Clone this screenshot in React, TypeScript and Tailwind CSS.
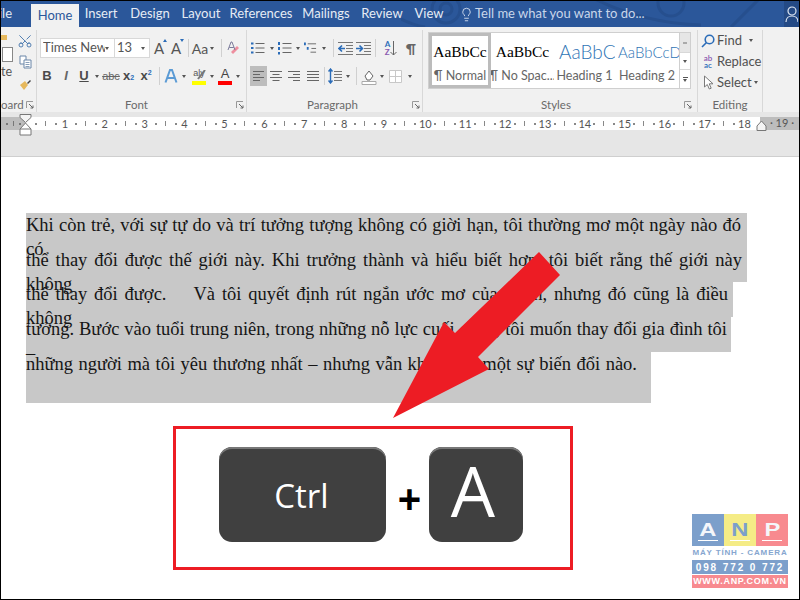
import React from "react";
import { Scissors, Lightbulb } from "lucide-react";

const Cell = ({ c, children }: { c: string; children?: React.ReactNode }) => (
  <div className={"flex shrink-0 items-center justify-center h-full " + c}>{children}</div>
);
const Caret = () => <div className="w-0 h-0 border-x-[2.5px] border-x-transparent border-t-[3px] border-t-[#555]" />;
const Sep = () => <div className="w-px h-[18px] bg-[#d0d0d0]" />;
const Launcher = () => (
  <svg width="8" height="8" viewBox="0 0 8 8" className="shrink-0">
    <path d="M0.5 7V0.5H7" stroke="#999" fill="none" />
    <path d="M3 3L7 7M7 4.5V7H4.5" stroke="#666" fill="none" />
  </svg>
);
const Lines = ({ d, w = 16, color = "#666" }: { d: string; w?: number; color?: string }) => (
  <svg width={w} height="14" viewBox={`0 0 ${w} 14`}>
    <path d={d} stroke={color} strokeWidth="1" fill="none" />
  </svg>
);
const Dots = ({ d }: { d: string }) => <path d={d} stroke="#2b6cb8" strokeWidth="2" fill="none" />;

const Tab = ({ c, children }: { c: string; children: React.ReactNode }) => (
  <div className={"flex shrink-0 items-center justify-center h-[26px] text-[#e6ecf5] " + c}>{children}</div>
);

const GroupLabel = ({ label, c }: { label: string; c: string }) => (
  <div className={"flex items-center h-[15px] text-[11.5px] text-[#6a6a6a] " + c}>
    <span className="flex-1 text-center">{label}</span>
    <Launcher />
  </div>
);

function TitleBar() {
  return (
    <div className="relative flex h-[26px] bg-[#2b579a] text-[13px] overflow-hidden">
      <svg className="absolute left-[400px] top-0" width="399" height="26" viewBox="0 0 399 26">
        <g stroke="#264f8e" strokeWidth="3" fill="none">
          <circle cx="45" cy="8" r="14" />
          <circle cx="45" cy="8" r="6" />
          <circle cx="270" cy="2" r="13" />
          <path d="M190 -4 Q 240 22 300 24" />
          <path d="M330 26 L 358 -2" />
          <path d="M0 18 Q 12 24 24 26" />
        </g>
      </svg>
      <div className="relative flex w-[30px] shrink-0 items-center justify-end pr-[19px] text-[#e6ecf5]">ile</div>
      <div className="relative mt-[3px] flex h-[23px] w-[48px] shrink-0 items-center justify-center bg-[#f1f1f1] text-[#2b579a]">Home</div>
      <Tab c="relative w-[44px]">Insert</Tab>
      <Tab c="relative w-[54px]">Design</Tab>
      <Tab c="relative w-[48px]">Layout</Tab>
      <Tab c="relative w-[72px]">References</Tab>
      <Tab c="relative w-[58px]">Mailings</Tab>
      <Tab c="relative w-[54px]">Review</Tab>
      <Tab c="relative w-[40px]">View</Tab>
      <div className="relative flex h-[26px] items-center pl-[10px] text-[#c9d6ea] text-[13px]">
        <Lightbulb size={15} strokeWidth={1.4} color="#dbe4f2" className="mr-[1px]" />
        Tell me what you want to do...
      </div>
      <div className="absolute right-0 top-0 flex h-[26px] w-[15px] items-center justify-center bg-[#244a85]">
        <svg width="13" height="16" viewBox="0 0 13 16" fill="none" stroke="#dfe7f3" strokeWidth="1.2">
          <circle cx="7" cy="5" r="4" />
          <path d="M1 16c0-4 3-6 6-6s6 2 6 6" />
        </svg>
      </div>
    </div>
  );
}

function Clipboard() {
  return (
    <div className="mt-[3px] flex w-[36px] shrink-0 flex-col border-r border-[#d8d8d8] pt-[3px] overflow-hidden">
      <div className="flex h-[64px] shrink-0">
        <div className="w-[16px] shrink-0 flex flex-col">
          <div className="mt-[2px] h-[5px] w-[6px] bg-[#e6b85c]" />
          <div className="mt-[7px] ml-[1px] h-[15px] w-[11px] border border-[#888] bg-white" />
          <div className="mt-[3px] text-[12.5px] leading-[14px] text-[#555]">te</div>
        </div>
        <div className="flex flex-col items-center w-[16px]">
          <Scissors size={16} strokeWidth={1.3} color="#3b6ea8" className="-rotate-90" />
          <svg width="13" height="14" viewBox="0 0 13 14" fill="#fff" stroke="#6a86a8" className="mt-[6px]">
            <path d="M1 1h6v8H1z" />
            <path d="M5 5h7v8H5z" />
            <path d="M6.5 7.5h4M6.5 9.5h4M6.5 11.5h4" strokeWidth=".8" />
          </svg>
          <svg width="13" height="14" viewBox="0 0 13 14" className="mt-[8px]">
            <path d="M1 8l5-4 3 4-4 5z" fill="#e6b85c" />
            <path d="M8 6l3-3 1 1-3 3z" fill="#444" />
          </svg>
        </div>
      </div>
      <GroupLabel label="oard" c="pr-[2px] [&>span]:text-left" />
    </div>
  );
}

const SizeA = ({ up }: { up?: boolean }) => (
  <div className="relative">
    <span className="text-[15px] text-[#555]">A</span>
    <div
      className={
        up
          ? "absolute -right-[3px] top-[3px] w-0 h-0 border-x-[2.5px] border-x-transparent border-b-[3px] border-b-[#2b6cb8]"
          : "absolute -right-[3px] top-[3px] w-0 h-0 border-x-[2.5px] border-x-transparent border-t-[3px] border-t-[#2b6cb8]"
      }
    />
  </div>
);

function FontGroup() {
  return (
    <div className="mt-[3px] flex w-[210px] shrink-0 flex-col border-r border-[#d8d8d8] pt-[8px]">
      <div className="flex h-[20px] shrink-0 pl-[3px]">
        <div className="flex h-full w-[75px] shrink-0 items-center border border-[#d8d8d8] bg-white pl-[2px] text-[13px] text-[#555] overflow-hidden">
          <span className="w-[62px] shrink-0 overflow-hidden whitespace-nowrap">Times New R</span>
          <Caret />
        </div>
        <div className="-ml-px flex h-full w-[36px] shrink-0 items-center justify-between border border-[#d8d8d8] bg-white pl-[2px] pr-[4px] text-[13px] text-[#555]">
          <span>13</span>
          <Caret />
        </div>
        <Cell c="w-[18px]"><SizeA up /></Cell>
        <Cell c="w-[16px]"><SizeA /></Cell>
        <Cell c="w-[8px]"><Sep /></Cell>
        <Cell c="w-[16px] text-[14px] text-[#555]">Aa</Cell>
        <Cell c="w-[8px]"><Caret /></Cell>
        <Cell c="w-[10px]"><Sep /></Cell>
        <Cell c="w-[16px]">
          <svg width="14" height="15" viewBox="0 0 14 15">
            <path d="M6 13l6-6-2-2-6 6z" fill="#ee8f9f" />
            <path d="M1 9l3-8h1l3 8M2.300 6.500h4.500" stroke="#7a7a9a" fill="none" />
          </svg>
        </Cell>
      </div>
      <div className="mt-[8px] flex h-[20px] shrink-0 pl-[1px] text-[#4a4a4a] [font-family:'Liberation_Sans',sans-serif]">
        <Cell c="w-[18px] text-[13px] font-bold">B</Cell>
        <Cell c="w-[20px] text-[13px] italic font-bold text-[#666]">I</Cell>
        <Cell c="w-[16px] text-[13px] font-bold underline">U</Cell>
        <Cell c="w-[10px]"><Caret /></Cell>
        <Cell c="w-[18px] text-[11px] line-through text-[#666]">abc</Cell>
        <Cell c="w-[17px] text-[13px] font-bold">x<sub className="text-[7px] text-[#2b6cb8]">2</sub></Cell>
        <Cell c="w-[18px] text-[13px] font-bold">x<sup className="text-[7px] text-[#2b6cb8]">2</sup></Cell>
        <Cell c="w-[8px]"><Sep /></Cell>
        <Cell c="w-[16px]">
          <svg width="14" height="16" viewBox="0 0 14 16"><path d="M1.500 14.500L6 2h2l4.500 12.500M3.500 10h7" stroke="#5b9bd5" strokeWidth="2" fill="none" /></svg>
        </Cell>
        <Cell c="w-[10px]"><Caret /></Cell>
        <Cell c="w-[20px]">
          <div className="relative flex flex-col items-center">
            <span className="text-[9px] leading-[11px] text-[#555]">aly</span>
            <svg className="absolute left-[5px] top-[2px]" width="9" height="10" viewBox="0 0 9 10"><path d="M8 0L1 9" stroke="#777" strokeWidth="2" /></svg>
            <div className="mt-[2px] h-[4px] w-[14px] bg-[#ffff00]" />
          </div>
        </Cell>
        <Cell c="w-[6px]"><Caret /></Cell>
        <Cell c="w-[20px]">
          <div className="flex flex-col items-center">
            <span className="text-[13px] leading-[13px] text-[#444]">A</span>
            <div className="mt-[1px] h-[4px] w-[14px] bg-[#ff0000]" />
          </div>
        </Cell>
        <Cell c="w-[6px]"><Caret /></Cell>
      </div>
      <div className="mt-[11px]">
        <GroupLabel label="Font" c="pr-[2px]" />
      </div>
    </div>
  );
}

const ListIcon = ({ kind }: { kind: number }) => (
  <svg width="14" height="14" viewBox="0 0 14 14">
    {kind === 0 && <Dots d="M0 2.500h2.500M0 7h2.500M0 11.500h2.500" />}
    {kind === 1 && <Dots d="M1 1v3M1 6v3M1 11v2.500" />}
    {kind === 2 && <Dots d="M1 1v3M4 6v3" />}
    <path d={kind === 2 ? "M4 2.500h9M8 7.500h5M7 11.500h6" : "M4.500 2.500h9M4.500 7h9M4.500 11.500h9"} stroke="#666" fill="none" />
  </svg>
);

const Indent = ({ flip }: { flip?: boolean }) => (
  <svg width="15" height="13" viewBox="0 0 15 13" fill="none">
    <path d="M0 .5h15M8 3.500h7M8 6.500h7M8 9.500h7M0 12.500h15" stroke="#777" />
    {flip ? (
      <path d="M0 6.500h6M3.500 3.500l3 3-3 3" stroke="#2b6cb8" strokeWidth="1.600" />
    ) : (
      <path d="M7 6.500H1M4 3.500l-3 3 3 3" stroke="#2b6cb8" strokeWidth="1.600" />
    )}
  </svg>
);

function Paragraph() {
  return (
    <div className="mt-[3px] flex w-[176px] shrink-0 flex-col border-r border-[#d8d8d8] pt-[8px]">
      <div className="flex h-[20px] shrink-0 pl-[4px]">
        <Cell c="w-[14px]"><ListIcon kind={0} /></Cell>
        <Cell c="w-[13px]"><Caret /></Cell>
        <Cell c="w-[14px]"><ListIcon kind={1} /></Cell>
        <Cell c="w-[12px]"><Caret /></Cell>
        <Cell c="w-[13px]"><ListIcon kind={2} /></Cell>
        <Cell c="w-[13px]"><Caret /></Cell>
        <Cell c="w-[6px]"><Sep /></Cell>
        <Cell c="w-[18px]"><Indent /></Cell>
        <Cell c="w-[18px]"><Indent flip /></Cell>
        <Cell c="w-[6px]"><Sep /></Cell>
        <Cell c="w-[26px]">
          <div className="flex items-center">
            <div className="flex flex-col text-[8px] leading-[8px] font-bold">
              <span className="text-[#2b6cb8]">A</span>
              <span className="text-[#8a5ab0]">Z</span>
            </div>
            <svg width="7" height="15" viewBox="0 0 7 15"><path d="M3.500 0v14M.5 11l3 3 3-3" stroke="#666" fill="none" /></svg>
          </div>
        </Cell>
        <Cell c="w-[14px] text-[14px] font-bold text-[#666]">¶</Cell>
      </div>
      <div className="mt-[8px] flex h-[20px] shrink-0 pl-[3px]">
        <Cell c="w-[17px] bg-[#bdbdbd]"><Lines w={11} d="M0 2.500h11M0 5.500h7M0 8.500h11M0 11.500h7" /></Cell>
        <Cell c="w-[18px]"><Lines w={12} d="M0 2.500h12M2.500 5.500h7M0 8.500h12M2.500 11.500h7" /></Cell>
        <Cell c="w-[18px]"><Lines w={12} d="M0 2.500h12M5 5.500h7M0 8.500h12M5 11.500h7" /></Cell>
        <Cell c="w-[19px]"><Lines w={12} d="M0 2.500h12M0 5.500h12M0 8.500h12M0 11.500h12" /></Cell>
        <Cell c="w-[4px]"><Sep /></Cell>
        <Cell c="w-[18px]">
          <svg width="14" height="16" viewBox="0 0 14 16" fill="none">
            <path d="M2.500 1v14M.5 3.500l2-2.500 2 2.500M.5 12.500l2 2.500 2-2.500" stroke="#2b6cb8" strokeWidth="1.400" />
            <path d="M6 3.500h8M6 6.500h8M6 9.500h8M6 12.500h8" stroke="#777" />
          </svg>
        </Cell>
        <Cell c="w-[8px]"><Caret /></Cell>
        <Cell c="w-[8px]"><Sep /></Cell>
        <Cell c="w-[18px]">
          <svg width="16" height="17" viewBox="0 0 16 17" fill="none">
            <path d="M4 8l4-5 4 5-3 4H6z" stroke="#666" fill="#fff" />
            <path d="M1 13.500h14v3H1z" stroke="#aaa" fill="#fff" />
          </svg>
        </Cell>
        <Cell c="w-[8px]"><Caret /></Cell>
        <Cell c="w-[18px]">
          <svg width="13" height="13" viewBox="0 0 13 13" fill="#fff" stroke="#c8c8c8"><path d="M.5.500h12v12H.5zM6.500.5v12M.5 6.500h12" /></svg>
        </Cell>
        <Cell c="w-[12px]"><Caret /></Cell>
      </div>
      <div className="mt-[11px]">
        <GroupLabel label="Paragraph" c="pr-[2px] pl-[6px]" />
      </div>
    </div>
  );
}

const StyleItem = ({ c, sample, label, sampleC }: { c: string; sample: string; label: string; sampleC: string }) => (
  <div className={"flex shrink-0 flex-col items-center overflow-hidden " + c}>
    <div className={"flex h-[34px] shrink-0 items-center whitespace-nowrap w-full overflow-hidden " + sampleC}>{sample}</div>
    <div className="whitespace-nowrap text-[12.5px] leading-[14px] text-[#666]">{label}</div>
  </div>
);

function Styles() {
  return (
    <div className="mt-[3px] flex w-[275px] shrink-0 flex-col border-r border-[#d8d8d8] pt-[2px] pl-[5px]">
      <div className="flex h-[57px] shrink-0 w-[263px] border border-[#cfcfcf] bg-white">
        <div className="flex h-full w-[62px] shrink-0 border-[3px] border-[#bcbcbc] bg-white">
          <StyleItem c="w-full -mt-[1px]" sample="AaBbCc" label="¶ Normal" sampleC="justify-center text-[15.5px] text-black [font-family:'Liberation_Serif',serif]" />
        </div>
        <StyleItem c="w-[63px] pt-[2px]" sample="AaBbCc" label="¶ No Spac..." sampleC="justify-center text-[15.5px] text-black [font-family:'Liberation_Serif',serif]" />
        <StyleItem c="w-[61px] pt-[2px]" sample="AaBbCc" label="Heading 1" sampleC="text-[19px] font-light text-[#2e74b5] pl-[5px]" />
        <StyleItem c="w-[64px] pt-[2px]" sample="AaBbCcD" label="Heading 2" sampleC="text-[15px] font-light text-[#2e74b5] pl-[3px]" />
        <div className="ml-auto flex h-full w-[12px] flex-col border-l border-[#cfcfcf] bg-[#f1f1f1]">
          <div className="flex h-[20px] items-center justify-center border-b border-[#d8d8d8] bg-[#e6e6e6]">
            <div className="h-[2px] w-[4px] bg-[#aaa]" />
          </div>
          <div className="flex h-[17px] items-center justify-center border-b border-[#d8d8d8] bg-white"><Caret /></div>
          <div className="flex flex-1 flex-col items-center justify-center gap-[1px] bg-white">
            <div className="h-px w-[5px] bg-[#555]" />
            <Caret />
          </div>
        </div>
      </div>
      <div className="mt-[8px]">
        <GroupLabel label="Styles" c="pr-[5px]" />
      </div>
    </div>
  );
}

function Editing() {
  return (
    <div className="mt-[3px] flex w-[65px] shrink-0 flex-col border-r border-[#d8d8d8] text-[13px] text-[#505050]">
      <div className="flex h-[21px] shrink-0 items-center pl-[2px]">
        <Cell c="w-[16px]">
          <svg width="14" height="14" viewBox="0 0 14 14" fill="none" stroke="#2b6cb8" strokeWidth="1.600"><circle cx="8.500" cy="5.500" r="4.300" /><path d="M5.500 8.500L1 13" /></svg>
        </Cell>
        <span className="ml-[1px]">Find</span>
        <span className="ml-[7px]"><Caret /></span>
      </div>
      <div className="flex h-[21px] shrink-0 items-center pl-[2px]">
        <Cell c="w-[16px]">
          <div className="flex flex-col text-[8px] leading-[7px] font-semibold text-center">
            <span className="text-[#8a5ab0]">ab</span>
            <span className="text-[#2b6cb8]">ac</span>
          </div>
        </Cell>
        <span className="ml-[1px]">Replace</span>
      </div>
      <div className="flex h-[21px] shrink-0 items-center pl-[2px]">
        <Cell c="w-[16px]">
          <svg width="11" height="15" viewBox="0 0 11 15" fill="#fff" stroke="#7a7a7a"><path d="M1.500 1v11l2.800-2.500 2 4.500 1.900-.8-2-4.400H10z" /></svg>
        </Cell>
        <span className="ml-[1px]">Select</span>
        <span className="ml-[2px]"><Caret /></span>
      </div>
      <div className="mt-[4px] h-[15px] text-center text-[11.5px] leading-[15px] text-[#6a6a6a]">Editing</div>
    </div>
  );
}

const RulerCell = ({ n }: { n: number }) => (
  <div className="relative flex h-full w-[39.9px] shrink-0 items-center text-[#555]">
    <div className="absolute left-[10px] h-[2px] w-[2px] bg-[#888]" />
    <div className="absolute left-[20px] h-[5px] w-px bg-[#888]" />
    <div className="absolute left-[30px] h-[2px] w-[2px] bg-[#888]" />
    <span className="absolute left-[34.900px] w-[10px] text-center text-[11px] leading-[13px]">{n}</span>
  </div>
);

function Ruler() {
  const nums = Array.from({ length: 18 }, (_, i) => i + 1);
  return (
    <div className="relative">
      <div className="h-[5px] bg-[#e6e6e6]" />
      <div className="flex h-[13px]">
        <div className="flex h-full w-[24px] shrink-0 items-center justify-around bg-[#bdbdbd] px-[2px]">
          <div className="h-[2px] w-[2px] bg-[#777]" />
          <div className="h-[5px] w-px bg-[#777]" />
          <div className="h-[2px] w-[2px] bg-[#777]" />
        </div>
        <div className="flex h-full w-[735px] shrink-0 bg-white">
          {nums.map((n) => (
            <RulerCell key={n} n={n} />
          ))}
        </div>
        <div className="relative flex h-full flex-1 items-center justify-center bg-[#bdbdbd] text-[11px] text-[#555]">
          <span className="ml-[5px]">· 19 ·</span>
        </div>
      </div>
      <div className="h-[26px] bg-[#e6e6e6]" />
      <svg className="absolute left-[18px] top-[2px]" width="13" height="22" viewBox="0 0 13 22" stroke="#777" fill="#f4f4f4">
        <path d="M1 .5h11v3l-5.500 5-5.500-5z" />
        <path d="M6.500 9l5.500 6v6H1v-6z" fill="#fff" />
        <path d="M1 15h11" />
      </svg>
      <svg className="absolute left-[755px] top-[8px]" width="11" height="11" viewBox="0 0 11 11" stroke="#777" fill="#f4f4f4">
        <path d="M5.500 1L10 6v4.500H1V6z" />
      </svg>
    </div>
  );
}

const TextLine = ({ c, inner, t }: { c: string; inner: string; t: string }) => (
  <div className={"bg-[#c8c8c8] " + c}>
    <div className={"[text-align:justify] [text-align-last:justify] " + inner}>{t}</div>
  </div>
);

const LogoCell = ({ c, t }: { c: string; t: string }) => (
  <div className={"flex w-[32px] flex-col items-center pt-[6px] " + c}>
    <span className="text-[19px] leading-[19px] scale-x-125">{t}</span>
    <div className="mt-[1px] h-px w-[20px] bg-white" />
  </div>
);

export default function App() {
  return (
    <div className="relative flex h-[600px] w-[800px] flex-col overflow-hidden border border-black bg-white [font-family:'Lato',sans-serif]">
      <TitleBar />
      <div className="flex h-[85px] shrink-0 bg-[#f1f1f1]">
        <Clipboard />
        <FontGroup />
        <Paragraph />
        <Styles />
        <Editing />
      </div>
      <Ruler />
      <div className="h-px bg-[#cfcfcf]" />
      <div className="flex-1 pl-[25px] pt-[56px]">
        <div className="text-[18.5px] leading-[24px] text-[#151515] [font-family:'Liberation_Serif',serif]">
          <TextLine c="w-[721px] h-[34.500px]" inner="w-[715px]" t="Khi còn trẻ, với sự tự do và trí tưởng tượng không có giời hạn, tôi thường mơ một ngày nào đó có" />
          <TextLine c="w-[721px] h-[34.500px]" inner="w-[716px]" t="thể thay đổi được thế giới này. Khi trưởng thành và hiểu biết hơn, tôi biết rằng thế giới này không" />
          <TextLine c="w-[707px] h-[35px]" inner="w-[702px]" t={"thể thay đổi được.\u00a0\u00a0\u00a0 Và tôi quyết định rút ngắn ước mơ của mình, nhưng đó cũng là điều không"} />
          <TextLine c="w-[705px] h-[35px]" inner="w-[701px]" t="tưởng. Bước vào tuổi trung niên, trong những nỗ lực cuối cùng, tôi muốn thay đổi gia đình tôi –" />
          <TextLine c="w-[625px] h-[51px]" inner="w-[611px]" t="những người mà tôi yêu thương nhất – nhưng vẫn không có một sự biến đổi nào." />
        </div>
        <div className="ml-[147px] mt-[23px] flex h-[144px] w-[400px] items-start border-[3px] border-[#ed1c24] pl-[43px] pt-[18px]">
          <div className="flex h-[95px] w-[167px] items-center justify-center rounded-[13px] bg-[#404040] pr-[2px] pt-[3px] text-[33px] text-white shadow-[inset_0_2px_0_#777] [font-family:'Open_Sans',sans-serif]">
            Ctrl
          </div>
          <div className="flex h-[95px] w-[43px] items-center justify-center pl-[4px] pt-[9px] text-[40px] font-bold text-black [font-family:'Liberation_Sans',sans-serif]">
            +
          </div>
          <div className="flex h-[95px] w-[94px] items-center justify-center rounded-[13px] bg-[#404040] pb-[9px] pr-[6px] text-[70px] font-normal text-white shadow-[inset_0_2px_0_#777] [font-family:'Open_Sans',sans-serif]">
            A
          </div>
        </div>
      </div>

      <svg className="absolute left-0 top-0" width="798" height="598" viewBox="1 1 798 598">
        <polygon points="539,252 560,275 478,357 489,369 393,418 444,322 455,333" fill="#ed1c24" />
      </svg>

      <div className="absolute left-[691px] top-[513px] flex w-[96px] flex-col [font-family:'Liberation_Sans',sans-serif]">
        <div className="flex h-[32px] font-bold text-[#f4f6fa]">
          <LogoCell c="bg-[#7c9fcb]" t="A" />
          <LogoCell c="bg-[#f5ec86] text-[#7c9fcb]" t="N" />
          <LogoCell c="bg-[#f88a8f]" t="P" />
        </div>
        <div className="flex h-[14px] items-center justify-center whitespace-nowrap text-[8px] font-bold tracking-[0.85px] text-[#86a6cf]">
          MÁY TÍNH - CAMERA
        </div>
        <div className="flex h-[14px] items-center justify-center whitespace-nowrap bg-[#7c9fcb] text-[10px] font-bold tracking-[1.9px] text-white">
          098 772 0 772
        </div>
        <div className="mt-px flex h-[13px] items-center justify-center whitespace-nowrap bg-[#f88a8f] text-[9px] font-bold tracking-[0.7px] text-white">
          WWW.ANP.COM.VN
        </div>
      </div>
    </div>
  );
}
